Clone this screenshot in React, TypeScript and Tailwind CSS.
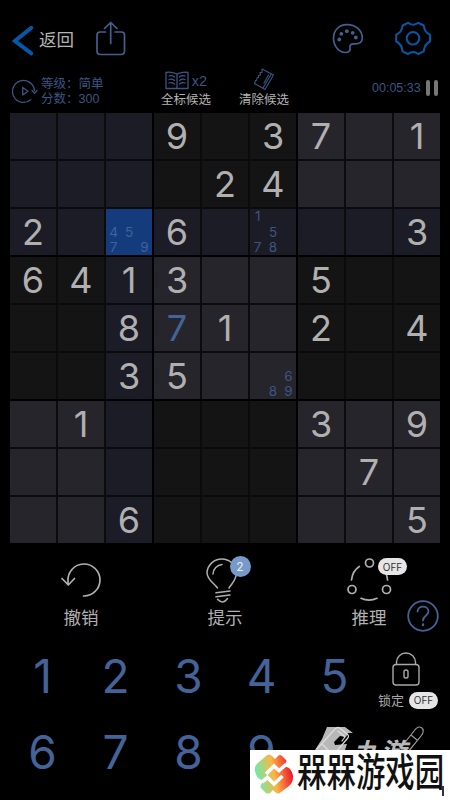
import type { ReactNode } from 'react'
import clsx from 'clsx'

// '.' is an empty cell
const BOARD = [
  '...9.37.1',
  '....24...',
  '2..6....3',
  '6413..5..',
  '..871.2.4',
  '..35.....',
  '.1....3.9',
  '.......7.',
  '..6.....5',
]

const NOTES: Record<string, number[]> = {
  '2-2': [4, 5, 7, 9],
  '2-5': [1, 5, 7, 8],
  '5-5': [6, 8, 9],
}

const SELECTED = { row: 2, col: 2 }
const USER_CELL = '4-3'
const THREE = [0, 1, 2]

function Cell({ row, col }: { row: number; col: number }) {
  const key = `${row}-${col}`
  const value = BOARD[row][col]
  const notes = NOTES[key]
  const boxRow = Math.floor(row / 3)
  const boxCol = Math.floor(col / 3)
  const isSelected = row === SELECTED.row && col === SELECTED.col
  const isPeer = row === SELECTED.row || col === SELECTED.col || (boxRow === 0 && boxCol === 0)
  const isLight = (boxRow + boxCol) % 2 === 0

  return (
    <div
      className={clsx(
        'h-[46px] w-[46px]',
        isSelected ? 'bg-[#143c7c]' : isPeer ? 'bg-[#1c1c26]' : isLight ? 'bg-[#26252b]' : 'bg-[#141414]'
      )}
    >
      {value !== '.' && (
        <div
          className={clsx(
            'flex h-full items-center justify-center text-[36px] font-[380] leading-none',
            key === USER_CELL ? 'text-[#446399]' : 'text-[#b0b0b0]'
          )}
        >
          {value}
        </div>
      )}
      {notes && (
        <div
          className={clsx(
            'grid h-full grid-cols-3 grid-rows-3 place-items-center text-[13.5px] leading-none',
            isSelected ? 'text-[#3f639c]' : 'text-[#3d5684]'
          )}
        >
          {[1, 2, 3, 4, 5, 6, 7, 8, 9].map((n) => (
            <span key={n} className="mt-px">
              {notes.includes(n) ? n : ''}
            </span>
          ))}
        </div>
      )}
    </div>
  )
}

function Board() {
  return (
    <div className="mx-[10px] grid grid-cols-3 gap-[2px]">
      {THREE.map((br) =>
        THREE.map((bc) => (
          <div key={`${br}${bc}`} className="grid grid-cols-3 gap-[2px] bg-[#0b0b0d]">
            {THREE.map((r) => THREE.map((c) => <Cell key={`${r}${c}`} row={br * 3 + r} col={bc * 3 + c} />))}
          </div>
        ))
      )}
    </div>
  )
}

function Icon({ w, h, className, sw = 1.5, children }: { w: number; h: number; className?: string; sw?: number; children: ReactNode }) {
  return (
    <svg
      width={w}
      height={h}
      viewBox={`0 0 ${w} ${h}`}
      fill="none"
      stroke="currentColor"
      strokeWidth={sw}
      strokeLinecap="round"
      strokeLinejoin="round"
      className={clsx('shrink-0', className)}
    >
      {children}
    </svg>
  )
}

function Header() {
  return (
    <div className="flex h-[68px] items-start pt-[20px]">
      <Icon w={24} h={38} sw={4} className="ml-[11px] text-[#0558a8]">
        <path d="M20.300 7.800L4 21L20.300 33.300" strokeLinejoin="miter" />
      </Icon>
      <span className="ml-[4px] mt-[6px] text-[17.5px] leading-[28px] text-[#b4b4b4]">返回</span>
      <Icon w={32} h={38} sw={1.7} className="ml-[21px] text-[#43608f]">
        <path d="M10.5 12H5Q2 12 2 15V31Q2 34.500 5.500 34.500H26Q29.500 34.500 29.500 31V15Q29.500 12 26.500 12H20" />
        <path d="M15.700 23.500V3M9.500 8.500L15.700 2.500L22 8.500" />
      </Icon>
      <Icon w={34} h={36} sw={1.7} className="ml-[204px] text-[#43608f]">
        <path d="M16 4.700C7.500 4.700 2.500 11 2.500 18C2.500 26 8 32.500 14.500 32.500C18.500 32.500 19.500 30 19 27.500C18.500 24.500 20.500 23.700 23.500 23.800C28.500 24 31.300 22.500 31.300 18C31.300 10 24.500 4.700 16 4.700Z" />
        <g fill="currentColor" stroke="none">
          <circle cx="8.300" cy="19.500" r="1.9" />
          <circle cx="10.300" cy="13.800" r="1.9" />
          <circle cx="15.800" cy="11.200" r="1.9" />
          <circle cx="21.700" cy="12.800" r="1.9" />
          <circle cx="24.800" cy="17.500" r="1.9" />
        </g>
      </Icon>
      <Icon w={38} h={38} sw={2} className="ml-[28.5px] text-[#0558a8]">
        <path d="M14 2.800Q19 6.500 24.300 2.800L29.700 5.500Q30.500 12.500 36 14.700V21.500Q30.500 24 29.700 31.300L24.300 34Q19 30 14 34L8.600 31.300Q7.800 24 2.200 21.500V14.700Q7.800 12.500 8.600 5.500Z" />
        <circle cx="19" cy="18.300" r="6.300" />
      </Icon>
    </div>
  )
}

function StatusBar() {
  return (
    <div className="flex h-[45px] items-start text-[12.5px] text-[#3b5684]">
      <Icon w={26} h={26} sw={1.3} className="ml-[12px] mt-[10px]">
        <path d="M18.700 21.800A11 11 0 1 1 22.500 12.500M20 12.500L22.700 15.200L25 12.500" />
        <path d="M10.700 9.500V17L16 13.300Z" />
      </Icon>
      <div className="ml-[3px] mt-[9px] w-[66px] whitespace-nowrap leading-[14.5px]">
        <div>等级：简单</div>
        <div>分数：300</div>
      </div>
      <div className="ml-[46px] flex w-[66px] flex-col items-center pt-[3px]">
        <div className="flex items-center">
          <Icon w={24} h={19} sw={1.3}>
            <path d="M12 3Q6 .500 1 1.500V17.500H23V1.500Q18 .500 12 3ZM12 3V17M4 5Q7 4 9.500 6M4 8.500Q7 7.500 9.500 9.500M4 12Q7 11 9.500 13M20 5Q17 4 14.500 6M20 8.500Q17 7.500 14.500 9.500M20 12Q17 11 14.500 13" />
          </Icon>
          <span className="ml-[3px] mt-px text-[14.5px] leading-[18px]">x2</span>
        </div>
        <span className="mt-px text-[12.5px] leading-[18px] text-[#b4b4b4]">全标候选</span>
      </div>
      <div className="ml-[12px] flex w-[66px] flex-col items-center">
        <Icon w={22} h={23} sw={1.1}>
          <path d="M9 1L20.500 7L12 21.500L1.500 15.500L2.500 12.500L3.500 12.500L4 10L5.500 9.500L5.500 7.500L7.500 7L7 4.500L9 4.500ZM18 6.500L10 20M15.500 7L11 15" />
        </Icon>
        <span className="leading-[18px] text-[#b4b4b4]">清除候选</span>
      </div>
      <span className="ml-[75px] mt-[13px] text-[12.5px] leading-[14px]">00:05:33</span>
      <div className="ml-[5px] mt-[12px] flex gap-[4px]">
        <div className="h-[16px] w-[4px] rounded-full bg-[#777]" />
        <div className="h-[16px] w-[4px] rounded-full bg-[#777]" />
      </div>
    </div>
  )
}

function OffBadge() {
  return (
    <span className="flex h-[17px] w-[29px] items-center justify-center rounded-full bg-[#e6e6e6] text-[10px] leading-none text-[#333]">
      OFF
    </span>
  )
}

function Tool({ label, children }: { label: string; children: ReactNode }) {
  return (
    <div className="flex w-[144px] flex-col items-center">
      <div className="relative flex h-[50px] w-[46px] justify-center">{children}</div>
      <span className="text-[17.5px] leading-[26px]">{label}</span>
    </div>
  )
}

function Toolbar() {
  return (
    <div className="mt-[12px] flex h-[83px] pl-[9px] text-[#b0b0b0]">
      <Tool label="撤销">
        <Icon w={46} h={50} sw={1.7}>
          <path d="M25.500 41A16 16 0 1 0 10 26V29M4 23.500L10.300 30L16.500 23.500" />
        </Icon>
      </Tool>
      <Tool label="提示">
        <Icon w={46} h={50} sw={1.5}>
          <path d="M15.500 33C12 28 5 25 5 17.500A14.800 14.800 0 0 1 34.500 17.500C34.500 25 30 28 27 33" />
          <path d="M11 19A10 10 0 0 1 20 9.500M14 37.800L28 36M14 41.800L28 40M15.500 44.300Q21 50 25.500 43.500" />
        </Icon>
        <span className="absolute left-[27.5px] top-[1px] flex h-[21px] w-[21px] items-center justify-center rounded-full bg-[#789aca] text-[12px] leading-none text-[#eee]">
          2
        </span>
      </Tool>
      <Tool label="推理">
        <Icon w={46} h={50} sw={1.7}>
          <circle cx="23.500" cy="8" r="4" />
          <circle cx="6" cy="34.500" r="4" />
          <circle cx="40.500" cy="34.500" r="4" />
          <path d="M5.500 25Q6.500 16 13.300 11.500M41.500 25Q41 18 37 14M15 43.300Q23 47 31 43.300" />
        </Icon>
        <span className="absolute left-[32px] top-[3px]">
          <OffBadge />
        </span>
      </Tool>
      <Icon w={32} h={32} sw={1.8} className="ml-[-34px] mt-[45px] text-[#446399]">
        <circle cx="16" cy="16" r="14.800" />
        <path d="M10.500 11.500C10.500 5 21.500 5 21.500 11.500C21.500 15.500 16 15.500 16 20.500" />
        <path d="M16 24.500V25" strokeWidth="2.4" />
      </Icon>
    </div>
  )
}

function NumberPad() {
  return (
    <div className="flex">
      <div className="ml-[6px] grid w-[365px] grid-cols-5 text-[46px] font-[390] leading-[76px] text-[#446399]">
        {[1, 2, 3, 4, 5, 6, 7, 8, 9].map((n) => (
          <span key={n} className="text-center">
            {n}
          </span>
        ))}
      </div>
      <div className="flex flex-col items-start pt-[14px] text-[#a8a8a8]">
        <Icon w={28} h={35} sw={1.4} className="ml-[21px]">
          <rect x="1" y="12.500" width="26" height="20.500" rx="3" />
          <path d="M4.500 12.500V10A9.500 9 0 0 1 23.500 10V12.500" />
          <rect x="12" y="18" width="4" height="8" rx="1.800" />
        </Icon>
        <div className="ml-[7px] mt-[4px] flex items-center">
          <span className="text-[13px] leading-[18px]">锁定</span>
          <span className="ml-[5px]">
            <OffBadge />
          </span>
        </div>
      </div>
    </div>
  )
}

function Watermark() {
  return (
    <>
      <div className="absolute left-[315px] top-[724px] h-[52px] w-[120px] text-[#b8b8b8]">
        <Icon w={120} h={52} sw={1.2}>
          <path d="M12 3H30L38 9H33L31 13L25 12L19 18L20 21L32 20L30 26H0L7 15Z" fill="currentColor" stroke="none" />
          <path d="M2 25L20 5Q23 2 26 5L32 10Q35 12 32 15L20 29M7 20L14 27M23 7L30 13L27 17" stroke="#ddd" />
          <path d="M84 26L99 7Q103 1 107 4Q110 7 106 12L93 28M96 11L102 16" stroke="#999" />
        </Icon>
        <span className="absolute left-[40px] top-[12px] origin-left -skew-x-12 scale-x-110 whitespace-nowrap text-[24px] font-bold leading-[32px] tracking-[1px]">
          九游
        </span>
      </div>
      <div className="absolute left-[250px] top-[750px] flex h-[50px] w-[200px] items-center bg-white">
        <svg width="38" height="40" viewBox="0 0 38 40" className="ml-[5px] mt-[-3px] shrink-0">
          <defs>
            <linearGradient id="brand" x1="0" y1=".6" x2="1" y2=".4">
              <stop offset="0" stopColor="#5cf2b4" />
              <stop offset=".5" stopColor="#fcb545" />
              <stop offset=".95" stopColor="#ee1c2e" />
            </linearGradient>
          </defs>
          <path
            d="M11 2Q14 -1 17 2L20 5L23 2Q25 0 27 2L31 6Q32 7 31 8L29 12L34 14Q38 18 38 23Q38 29 34 32L26 38Q23 41 20 38L18 36L15 39Q13 40 11 39L6 34Q5 33 6 31L8 27L3 24Q-1 18 0 13Q1 10 4 8Z"
            fill="url(#brand)"
          />
          <path d="M31 10.500L24 16.500L19 12L11 20M7 28L12.500 23.500L19 30L27.500 22" stroke="#fff" strokeWidth="3.6" fill="none" />
        </svg>
        <span className="ml-[4px] mt-[-5px] origin-left scale-x-[.765] whitespace-nowrap text-[38.5px] font-medium leading-none text-[#111]">
          槑槑游戏园
        </span>
        <span className="absolute left-[192px] top-[36px] h-[10px] w-[2px] bg-[#333]" />
      </div>
    </>
  )
}

export default function App() {
  return (
    <div className="relative h-[800px] w-[450px] overflow-hidden bg-black font-['Inter','Noto_Sans_CJK_SC',sans-serif]">
      <div className="font-['Liberation_Sans','Noto_Sans_CJK_SC',sans-serif]">
        <Header />
        <StatusBar />
      </div>
      <Board />
      <Toolbar />
      <NumberPad />
      <Watermark />
    </div>
  )
}
